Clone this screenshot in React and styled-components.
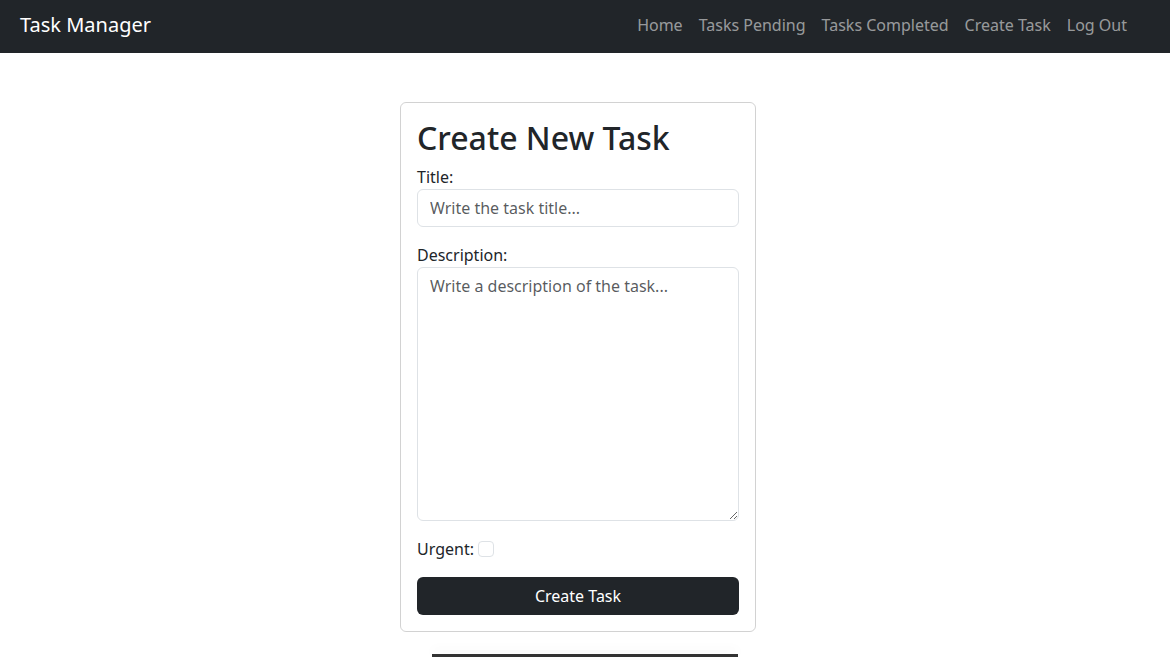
import React from 'react';
import styled, { createGlobalStyle } from 'styled-components';

const GlobalStyle = createGlobalStyle`
    body {
        margin: 0;
        font-family: "Noto Sans", "Open Sans", sans-serif;
        font-size: 16px;
        line-height: 1.5;
        color: #212529;
        background: #fff;
    }
    * { box-sizing: border-box; }
`;

const Navbar = styled.nav`
    height: 53px;
    background-color: #212529;
    display: flex;
    align-items: center;
    justify-content: space-between;
    padding: 0 35px 4px 20px;
`;

const Brand = styled.a`
    color: #fff;
    font-size: 20px;
    line-height: 30px;
    text-decoration: none;
`;

const NavLinks = styled.div`
    display: flex;
`;

const NavLink = styled.a`
    color: rgba(255, 255, 255, 0.55);
    padding: 8px;
    line-height: 24px;
    text-decoration: none;
`;

const Main = styled.main`
    width: 370px;
    margin: 49px auto 0;
`;

const Card = styled.div`
    width: 356px;
    border: 1px solid rgba(0, 0, 0, 0.175);
    border-radius: 6px;
    padding: 16px 16px 16px 16px;
`;

const Heading = styled.h2`
    margin: 0 0 8px;
    font-size: 32px;
    font-weight: 500;
    line-height: 1.2;
`;

const Field = styled.div`
    margin-bottom: 16px;
`;

const Label = styled.label`
    display: block;
`;

const inputStyles = `
    display: block;
    width: 100%;
    padding: 6px 12px;
    font-family: inherit;
    font-size: 16px;
    line-height: 24px;
    color: #212529;
    border: 1px solid #dee2e6;
    border-radius: 6px;
    outline: none;
    &::placeholder { color: rgba(33, 37, 41, 0.75); }
`;

const Input = styled.input`
    ${inputStyles}
`;

const TextArea = styled.textarea`
    ${inputStyles}
    height: 254px;
    resize: vertical;
`;

const CheckRow = styled.div`
    display: flex;
    align-items: center;
    gap: 4px;
    margin-bottom: 16px;
`;

const Checkbox = styled.input`
    appearance: none;
    width: 16px;
    height: 16px;
    margin: 0;
    border: 1px solid #dee2e6;
    border-radius: 4px;
    background: #fff;
`;

const SubmitButton = styled.button`
    display: block;
    width: 100%;
    height: 38px;
    border: none;
    border-radius: 6px;
    background-color: #212529;
    color: #fff;
    font-family: inherit;
    font-size: 16px;
    line-height: 24px;
`;

const Footer = styled.footer`
    width: 306px;
    height: 3px;
    margin: 22px auto 0;
    background-color: #333;
    box-shadow: 0 -4px 12px rgba(0, 0, 0, 0.06);
`;

function App() {
    return (
        <>
            <GlobalStyle />
            <Navbar>
                <Brand href="#">Task Manager</Brand>
                <NavLinks>
                    <NavLink href="#">Home</NavLink>
                    <NavLink href="#">Tasks Pending</NavLink>
                    <NavLink href="#">Tasks Completed</NavLink>
                    <NavLink href="#">Create Task</NavLink>
                    <NavLink href="#">Log Out</NavLink>
                </NavLinks>
            </Navbar>
            <Main>
                <Card>
                    <Heading>Create New Task</Heading>
                    <Field>
                        <Label htmlFor="title">Title:</Label>
                        <Input id="title" placeholder="Write the task title..." />
                    </Field>
                    <Field>
                        <Label htmlFor="description">Description:</Label>
                        <TextArea id="description" placeholder="Write a description of the task..." />
                    </Field>
                    <CheckRow>
                        <label htmlFor="urgent">Urgent:</label>
                        <Checkbox type="checkbox" id="urgent" />
                    </CheckRow>
                    <SubmitButton>Create Task</SubmitButton>
                </Card>
            </Main>
            <Footer />
        </>
    );
}

export default App;
